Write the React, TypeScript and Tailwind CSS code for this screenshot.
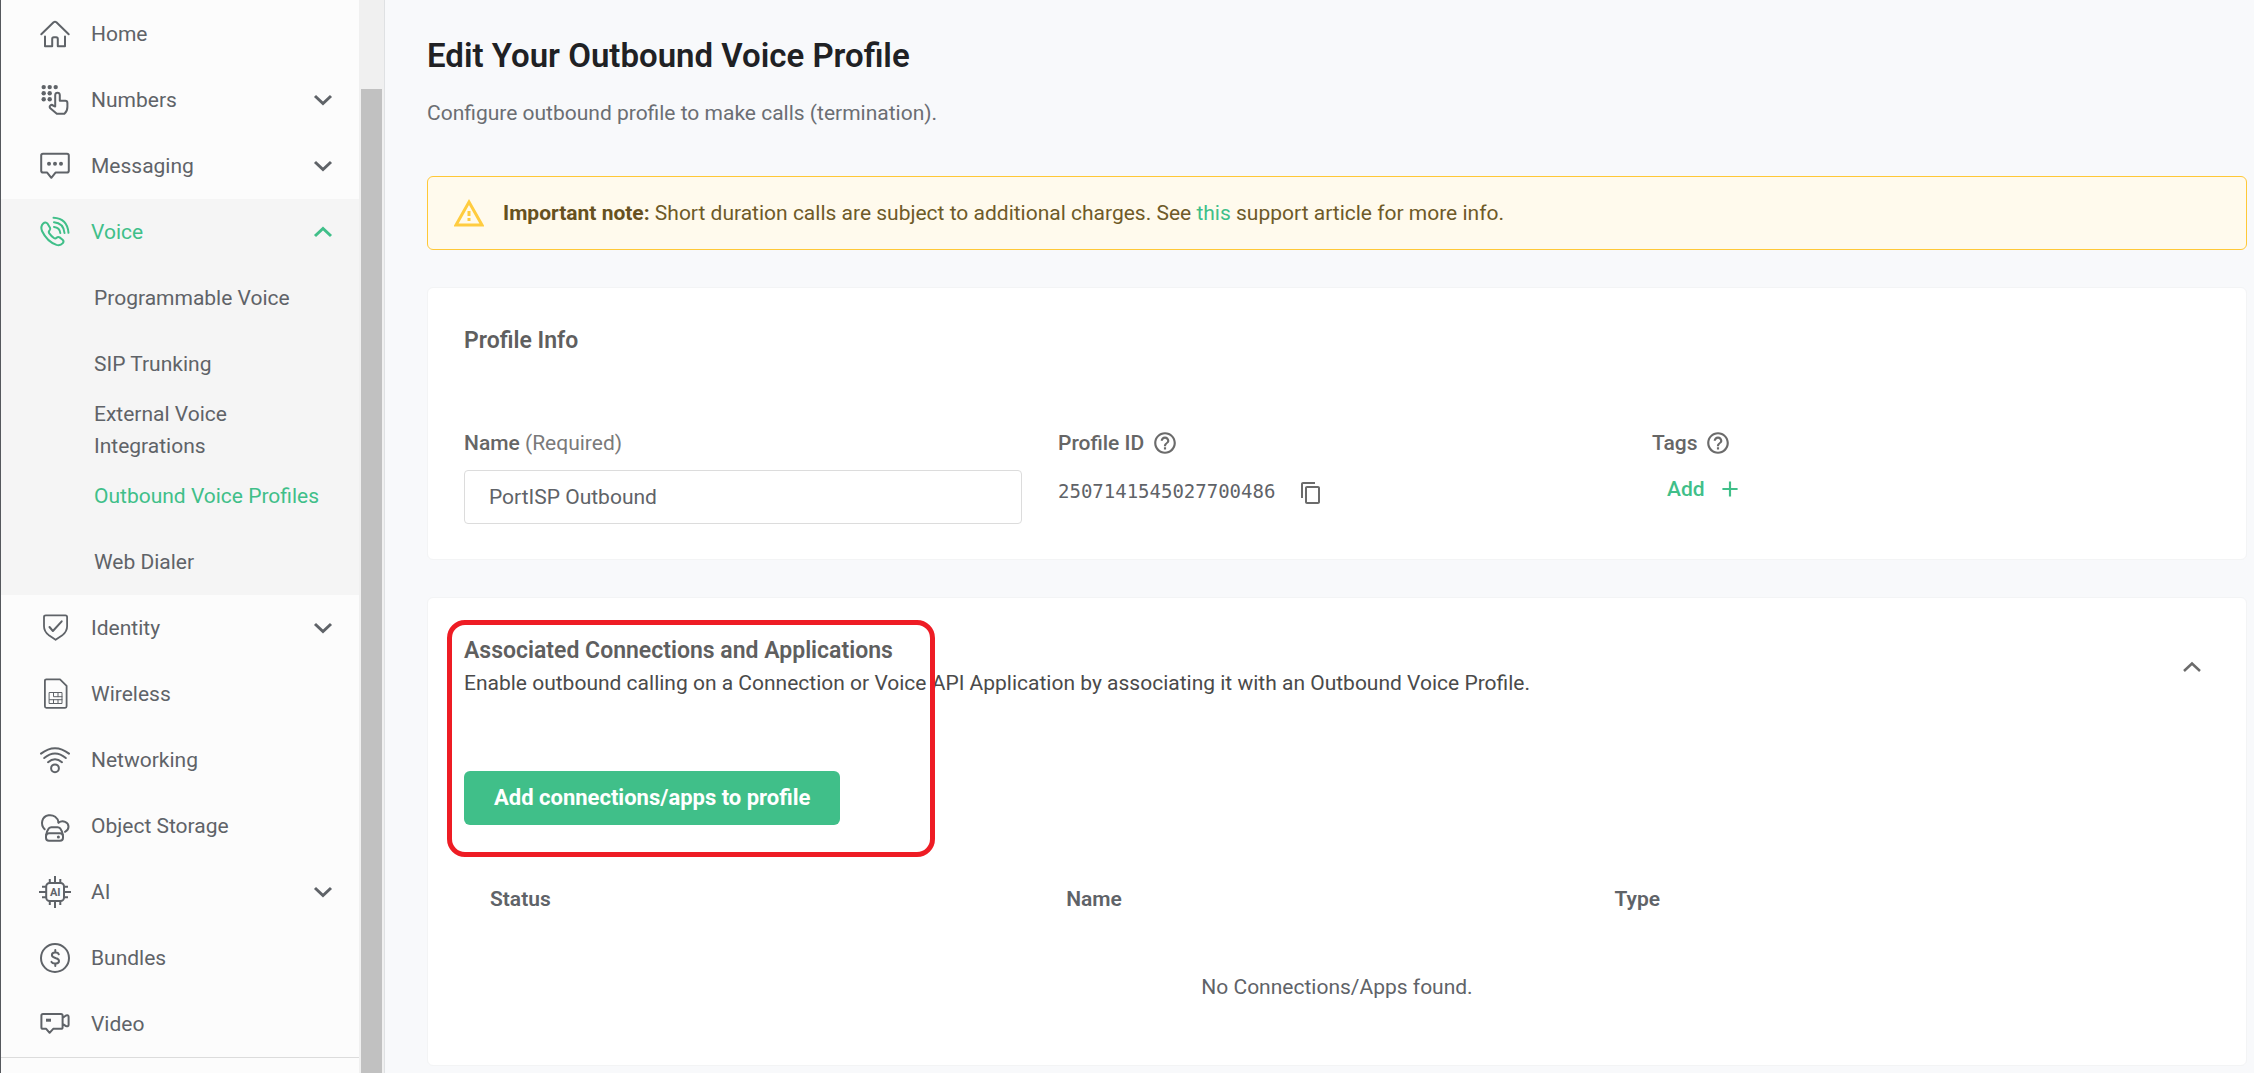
import React from "react";
import { MdHelpOutline, MdContentCopy, MdAdd } from "react-icons/md";

function Glyph({ children }: { children: React.ReactNode }) {
  return (
    <svg
      viewBox="0 0 32 32"
      className="size-8 shrink-0"
      fill="none"
      stroke="currentColor"
      strokeWidth="2"
      strokeLinecap="round"
      strokeLinejoin="round"
      aria-hidden="true"
    >
      {children}
    </svg>
  );
}

const icons: Record<string, React.ReactNode> = {
  home: (
    <Glyph>
      <path d="M2.3 16.2 14.6 4.3q1.4-1 2.8 0L29.7 16.2" />
      <path d="M6 18.5v9.7h7.2V21q0-1.7 1.6-1.7h2.4q1.6 0 1.6 1.7v7.2H26v-9.7" />
    </Glyph>
  ),
  numbers: (
    <Glyph>
      <g fill="currentColor" stroke="none">
        <circle cx="4.7" cy="3.1" r="2.2" />
        <circle cx="10.7" cy="3.1" r="2.2" />
        <circle cx="16.7" cy="3.1" r="2.2" />
        <circle cx="4.7" cy="9.2" r="2.2" />
        <circle cx="10.7" cy="9.2" r="2.2" />
        <circle cx="4.7" cy="15.3" r="2.2" />
        <circle cx="10.7" cy="15.3" r="2.2" />
      </g>
      <path d="M16.2 22.5V11q.2-2.2 2.3-2.2t2.3 2.2v5.8h5.4q2.2 0 2.2 2.2v4q0 4.4-3 6.8h-7.6l-6.2-5.2q-1.8-1.8-.2-3.2 1.4-1.2 3 .4z" />
    </Glyph>
  ),
  messaging: (
    <Glyph>
      <path d="M4 3.8h24q1.8 0 1.8 1.8v15.2q0 1.8-1.8 1.8H16.5l-4.2 5.2-4.1-5.2H4q-1.8 0-1.8-1.8V5.6Q2.2 3.8 4 3.8z" />
      <g fill="currentColor" stroke="none">
        <circle cx="10" cy="13.7" r="2" />
        <circle cx="16" cy="13.7" r="2" />
        <circle cx="22" cy="13.7" r="2" />
      </g>
    </Glyph>
  ),
  voice: (
    <Glyph>
      <path d="M4.2 7.5q2.3-2.2 4.4.2l2.4 4q.8 1.6-.5 2.9-1.300 1.200-.2 2.800 2 2.800 4.600 4.600 1.500 1 2.700-.2 1.500-1.400 3-.4l3 2.400q1.700 1.400.2 3.400-2.400 2.800-6.300 1.700Q8 25.500 3 15q-1.700-4.600 1.200-7.500z" />
      <path d="M14.5 1.8q13.7.6 15 15" />
      <path d="M15 6.3q9.500.8 10.500 10.700" />
      <path d="M15 10.900q5.700.5 6.300 6.100" />
    </Glyph>
  ),
  identity: (
    <Glyph>
      <path strokeWidth="1.8" d="M6.8 3.300h19.600q1.700 0 1.700 1.700v9.300q0 5-4.400 8.600l-7.100 4.900-7.100-4.900Q5 19.300 5 14.300V5q0-1.700 1.800-1.700z" />
      <path d="m10.500 15 3.400 4L22.700 9.300" />
    </Glyph>
  ),
  wireless: (
    <Glyph>
      <path strokeWidth="1.8" d="M7.400 1.300H21l6.600 6.600v20.400q0 1.500-1.500 1.500H7.400q-1.500 0-1.500-1.500V2.800q0-1.500 1.500-1.500z" />
      <path strokeWidth="1" d="M10.500 14.500H23v11H10.500zM14.500 14.500v4.200H23M19 14.500v4.200M10.500 21.700H23M14.500 21.700v3.800M19 21.700v3.800" />
    </Glyph>
  ),
  networking: (
    <Glyph>
      <path d="M2 9.600q14-10.800 28 0" />
      <path d="M5.200 14q10.800-9 21.600 0" />
      <path d="M9 18.200q7-6 14 0" />
      <circle cx="16" cy="24.300" r="3.900" />
    </Glyph>
  ),
  storage: (
    <Glyph>
      <path d="M5.700 19.200C1 14.300 2.600 6.600 9.600 5.300c5-.7 9.300 2.200 9.900 7.200" />
      <path d="M19.500 12.600c4.400-3 10-.4 10 4.200 0 2.200-1.200 3.900-3.500 5" />
      <rect x="7" y="23.200" width="17" height="7.500" rx="3" />
      <path d="M7.200 25q.8-4.400 2.600-6.600 1-1.200 2.500-1.200h6.400q1.500 0 2.500 1.200 1.800 2.200 2.600 6.600" />
      <circle cx="19.400" cy="26.900" r="1.500" fill="currentColor" stroke="none" />
    </Glyph>
  ),
  ai: (
    <Glyph>
      <rect x="7.200" y="7" width="17.800" height="18" rx="3.500" />
      <path strokeLinecap="butt" d="M16 0v7M10.800 3v4M21.300 3v4M16 25v7M10.800 25v4M21.300 25v4M0 16h7M3 10.800h4M3 21.300h4M25 16h7M25 10.800h4M25 21.300h4" />
      <text x="16.200" y="20" textAnchor="middle" fontSize="11" fontWeight="700" fontFamily="Roboto, sans-serif" fill="currentColor" stroke="none">
        AI
      </text>
    </Glyph>
  ),
  bundles: (
    <Glyph>
      <circle cx="16" cy="16" r="14" />
      <path d="M16.300 8v2.500M16.300 21.500V24M19.800 12.300q-.6-1.700-3-1.700h-1q-2.900.1-2.900 2.500 0 1.900 2.900 2.700l1.200.4q3 .8 3 2.800 0 2.400-3 2.500h-1.300q-2.300 0-3.200-1.600" />
    </Glyph>
  ),
  video: (
    <Glyph>
      <path d="M4 6h18q1.600 0 1.600 1.600v11.600q0 1.600-1.600 1.600h-7.800l-3.600 4-3.400-4H4q-1.600 0-1.600-1.600V7.600Q2.400 6 4 6zM23.600 9.800l3.400-2.300q2.600-.9 2.600 1.300v8q0 2.200-2.600 1.300l-3.400-2.300" />
      <path fill="currentColor" stroke="none" d="M7 10.700h5v3H7z" />
    </Glyph>
  ),
};

function Chevron({ up = false, thin = false }: { up?: boolean; thin?: boolean }) {
  return (
    <svg
      viewBox="0 0 20 12"
      className="h-3 w-5 shrink-0"
      fill="none"
      stroke="currentColor"
      strokeWidth={thin ? 2.5 : 3}
      aria-hidden="true"
    >
      <path d={up ? "M2 10 10 2.500 18 10" : "M2 2 10 9.500 18 2"} />
    </svg>
  );
}

type Item = { label: string; icon: string; expandable?: boolean; children?: string[] };

const items: Item[] = [
  { label: "Home", icon: "home" },
  { label: "Numbers", icon: "numbers", expandable: true },
  { label: "Messaging", icon: "messaging", expandable: true },
  {
    label: "Voice",
    icon: "voice",
    expandable: true,
    children: [
      "Programmable Voice",
      "SIP Trunking",
      "External Voice Integrations",
      "Outbound Voice Profiles",
      "Web Dialer",
    ],
  },
  { label: "Identity", icon: "identity", expandable: true },
  { label: "Wireless", icon: "wireless" },
  { label: "Networking", icon: "networking" },
  { label: "Object Storage", icon: "storage" },
  { label: "AI", icon: "ai", expandable: true },
  { label: "Bundles", icon: "bundles" },
  { label: "Video", icon: "video" },
];

function NavItem({ item }: { item: Item }) {
  const open = !!item.children;
  const rowClass = open
    ? "flex h-[66px] w-full items-center gap-5 pr-[26px] pl-[38px] text-left text-[#40bf89]"
    : "flex h-[66px] w-full items-center gap-5 pr-[26px] pl-[38px] text-left";
  const content = (
    <>
      {icons[item.icon]}
      <span className="flex-1">{item.label}</span>
      {item.expandable && <Chevron up={open} />}
    </>
  );
  return (
    <li className={open ? "bg-[#f5f5f5]" : ""}>
      {item.expandable ? (
        <button type="button" aria-expanded={open} className={rowClass}>
          {content}
        </button>
      ) : (
        <a href="#" className={rowClass}>
          {content}
        </a>
      )}
      {item.children && (
        <ul>
          {item.children.map((child) => (
            <li key={child}>
              <a
                href="#"
                className={
                  child === "Outbound Voice Profiles"
                    ? "flex h-[66px] items-center pr-8 pl-[93px] leading-8 text-[#40bf89]"
                    : "flex h-[66px] items-center pr-8 pl-[93px] leading-8"
                }
              >
                {child === "External Voice Integrations" ? (
                  <span>
                    External Voice
                    <br />
                    Integrations
                  </span>
                ) : (
                  <span className="whitespace-nowrap">{child}</span>
                )}
              </a>
            </li>
          ))}
        </ul>
      )}
    </li>
  );
}

function Sidebar() {
  return (
    <aside className="flex w-[385px] shrink-0 border-r border-l border-r-[#dfe1e3] border-l-[#55585d] bg-[#fcfcfc] text-[#5f6368]">
      <nav className="flex-1 pt-px" aria-label="Main">
        <ul className="border-b border-[#dcdcdc]">
          {items.map((item) => (
            <NavItem key={item.label} item={item} />
          ))}
        </ul>
      </nav>
      <div className="flex w-[25px] flex-col bg-[#f0f0f0] px-0.5 pt-[89px]">
        <div className="flex-1 bg-[#c1c1c1]" />
      </div>
    </aside>
  );
}

function ProfileInfo() {
  return (
    <section className="mt-[37px] rounded-md border border-[#f3f4f5] bg-white px-9 pt-[37px] pb-[35px]">
      <h2 className="text-[23px] leading-8 font-semibold text-[#5f5f5f]">Profile Info</h2>
      <div className="mt-[70px] grid grid-cols-3 gap-9 text-[#6b6b6b]">
        <div>
          <label htmlFor="profile-name" className="block leading-8 text-[#7a7a7a]">
            <span className="font-medium text-[#666666]">Name</span> (Required)
          </label>
          <input
            id="profile-name"
            type="text"
            defaultValue="PortISP Outbound"
            className="mt-[11px] block h-[54px] w-full rounded border border-[#dcdcdc] bg-white px-6 text-[#5f6368] outline-none"
          />
        </div>
        <div>
          <div className="flex items-center gap-2 leading-8">
            <span className="font-medium text-[#666666]">Profile ID</span>
            <MdHelpOutline className="size-[26px]" />
          </div>
          <div className="mt-[14px] flex items-center gap-6 leading-9">
            <span className="font-['DejaVu_Sans_Mono',monospace] text-[19px] text-[#5f6368]">2507141545027700486</span>
            <button type="button" aria-label="Copy profile ID" className="pt-1">
              <MdContentCopy className="size-6" />
            </button>
          </div>
        </div>
        <div>
          <div className="flex items-center gap-2 leading-8">
            <span className="font-medium text-[#666666]">Tags</span>
            <MdHelpOutline className="size-[26px]" />
          </div>
          <button type="button" className="mt-[14px] flex items-center gap-3 pl-[15px] leading-8 font-medium text-[#40bf89]">
            Add
            <MdAdd className="size-[26px]" />
          </button>
        </div>
      </div>
    </section>
  );
}

function Connections() {
  return (
    <section className="relative mt-[37px] rounded-md border border-[#f3f4f5] bg-white px-9 pt-[37px] pb-[22px]">
      <div className="flex items-center justify-between pr-2">
        <div>
          <h2 className="text-[23px] leading-8 font-semibold text-[#5f5f5f]">Associated Connections and Applications</h2>
          <p className="leading-8 text-[#4a4a4a]">
            Enable outbound calling on a Connection or Voice API Application by associating it with an Outbound Voice
            Profile.
          </p>
        </div>
        <button type="button" aria-label="Collapse section" className="text-[#6b6b6b]">
          <Chevron up thin />
        </button>
      </div>
      <button type="button" className="mt-[72px] h-[54px] rounded-md bg-[#40bf89] px-[30px] text-[22px] font-bold text-white">
        Add connections/apps to profile
      </button>
      <table className="mt-[42px] w-full table-fixed text-[#5f6368]">
        <thead>
          <tr className="text-left">
            <th className="h-16 w-[33%] px-[26px] font-semibold">Status</th>
            <th className="h-16 w-[31.4%] px-[26px] font-semibold">Name</th>
            <th className="h-16 px-[26px] font-semibold">Type</th>
          </tr>
        </thead>
        <tbody>
          <tr>
            <td colSpan={3} className="h-[112px] text-center">
              No Connections/Apps found.
            </td>
          </tr>
        </tbody>
      </table>
      <div className="pointer-events-none absolute top-[22px] left-[19px] h-[237px] w-[488px] rounded-[18px] border-5 border-[#ee1c24]" />
    </section>
  );
}

export default function App() {
  return (
    <div className="flex min-h-screen bg-[#f8f9fb] font-['Roboto',sans-serif] text-[21px] leading-8">
      <Sidebar />
      <main className="min-w-0 flex-1 pt-[33px] pr-[7px] pl-[42px]">
        <h1 className="text-[33px] leading-[46px] font-semibold text-[#202124]">Edit Your Outbound Voice Profile</h1>
        <p className="mt-[18px] text-[#6b6e73]">Configure outbound profile to make calls (termination).</p>
        <div
          role="note"
          className="mt-[47px] flex h-[74px] items-center gap-[19px] rounded-md border border-[#ffc837] bg-[#fffaed] px-[26px] text-[#6e5a28]"
        >
          <svg viewBox="0 0 30 30" className="size-[30px] shrink-0" aria-hidden="true">
            <path d="M15 4 28 27H2z" fill="none" stroke="#ffcc40" strokeWidth="3" />
            <path d="M13.500 13h3v5h-3zM13.500 20h3v3h-3z" fill="#ffcc40" />
          </svg>
          <p>
            <strong className="font-bold text-[#665120]">Important note:</strong> Short duration calls are subject to
            additional charges. See{" "}
            <a href="#" className="text-[#40bf89]">
              this
            </a>{" "}
            support article for more info.
          </p>
        </div>
        <ProfileInfo />
        <Connections />
      </main>
    </div>
  );
}
